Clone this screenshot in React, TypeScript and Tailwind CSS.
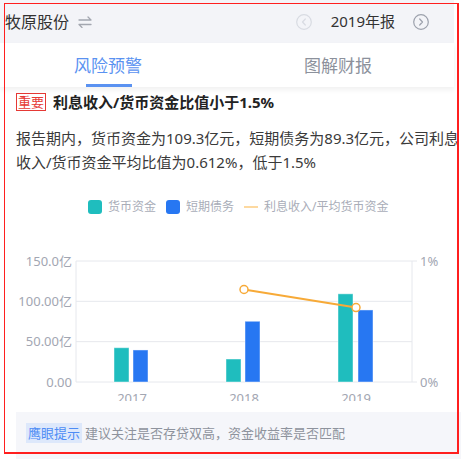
import React from "react";

const bars = [
  { x: 114, v: 42.5, c: "#1fbdbe" },
  { x: 133, v: 39.7, c: "#2777f2" },
  { x: 226, v: 28.5, c: "#1fbdbe" },
  { x: 245, v: 75.3, c: "#2777f2" },
  { x: 338, v: 109.3, c: "#1fbdbe" },
  { x: 358, v: 89.3, c: "#2777f2" },
];

const Y0 = 168;
const yv = (v: number) => Y0 - (v * 121) / 150;

function Chart() {
  return (
    <div className="h-[187px] w-[465px] overflow-hidden">
      <svg width="465" height="200" viewBox="0 0 465 200" style={{ fontFamily: "'Noto Sans','Noto Sans CJK SC',sans-serif" }}>
        {[0, 50, 100, 150].map((v) => (
          <line key={v} x1="76" x2="412" y1={yv(v)} y2={yv(v)} stroke="#e6e8ed" strokeWidth="1" />
        ))}
        <line x1="76" x2="76" y1={yv(150)} y2={Y0} stroke="#e6e8ed" />
        <line x1="412" x2="412" y1={yv(150)} y2={Y0} stroke="#e6e8ed" />
        <line x1="412" x2="417" y1={yv(150)} y2={yv(150)} stroke="#e6e8ed" />
        <line x1="412" x2="417" y1={Y0} y2={Y0} stroke="#e6e8ed" />
        {[
          ["150.0亿", 150],
          ["100.00亿", 100],
          ["50.00亿", 50],
          ["0.00", 0],
        ].map(([t, v]) => (
          <text key={t as string} x="72" y={yv(v as number) + 4.5} textAnchor="end" fontSize="13" fill="#a2a6b2">
            {t}
          </text>
        ))}
        <text x="420" y={yv(150) + 4.5} fontSize="13" fill="#a2a6b2">1%</text>
        <text x="420" y={Y0 + 4.5} fontSize="13" fill="#a2a6b2">0%</text>
        {bars.map((b, i) => (
          <rect key={i} x={b.x} y={yv(b.v)} width="15" height={Y0 - yv(b.v)} fill={b.c} stroke="#ffffff" strokeOpacity="0.45" strokeWidth="1" />
        ))}
        <line x1="244" y1="75.5" x2="356" y2="93.6" stroke="#f7aa38" strokeWidth="2" />
        <circle cx="244" cy="75.5" r="4" fill="#fff" stroke="#f7aa38" strokeWidth="1.5" />
        <circle cx="356" cy="93.6" r="4" fill="#fff" stroke="#f7aa38" strokeWidth="1.5" />
        {[
          ["2017", 132],
          ["2018", 244],
          ["2019", 356],
        ].map(([t, x]) => (
          <text key={t as string} x={x as number} y="189" textAnchor="middle" fontSize="13" fill="#a2a6b2">
            {t}
          </text>
        ))}
      </svg>
    </div>
  );
}

export default function App() {
  return (
    <div className="relative h-[459px] w-[465px] overflow-hidden bg-white font-['Noto_Sans','Noto_Sans_CJK_SC',sans-serif]">
      {/* header */}
      <div className="flex h-[43px] w-[454px] items-center bg-[#f3f4f8]">
        <span className="ml-[5px] text-[16px] leading-none text-[#333]">牧原股份</span>
        <svg className="ml-[9px]" width="14" height="12" viewBox="0 0 14 12" fill="none" stroke="#a3a7b0" strokeWidth="1.3" strokeLinecap="round" strokeLinejoin="round">
          <path d="M1 4 H13 L10 1" />
          <path d="M13 8.5 H1 L4 11.5" />
        </svg>
        <svg className="ml-auto" width="16" height="16" viewBox="0 0 16 16" fill="none" stroke="#d8dbe2" strokeWidth="1.2">
          <circle cx="8" cy="8" r="7.3" />
          <path d="M9.3 5 L6.5 8 L9.3 11" strokeLinecap="round" strokeLinejoin="round" />
        </svg>
        <span className="ml-[19px] text-[15px] leading-none text-[#333]">2019年报</span>
        <svg className="ml-[18px] mr-[25px]" width="16" height="16" viewBox="0 0 16 16" fill="none" stroke="#9ca1ac" strokeWidth="1.2">
          <circle cx="8" cy="8" r="7.3" />
          <path d="M6.7 5 L9.5 8 L6.7 11" strokeLinecap="round" strokeLinejoin="round" />
        </svg>
      </div>
      {/* tabs */}
      <div className="relative flex h-[44px] w-[454px] items-center bg-white shadow-[0_3px_5px_rgba(0,0,0,0.06)]">
        <div className="relative ml-[74px] flex h-full items-center">
          <span className="text-[17px] leading-none text-[#5a92f1]">风险预警</span>
          <div className="absolute bottom-0 left-[12px] h-[3px] w-[46px] bg-[#5a92f1]" />
        </div>
        <span className="ml-[162px] text-[17px] leading-none text-[#8c919c]">图解财报</span>
      </div>
      {/* content */}
      <div className="px-[16px]">
        <div className="mt-[6px] flex h-[18px] items-center">
          <span className="flex h-[18px] w-[30px] items-center justify-center border border-[#e53935] text-[13px] leading-none text-[#e53935]">
            重要
          </span>
          <span className="ml-[7px] text-[15px] font-bold leading-none text-[#222]">利息收入/货币资金比值小于1.5%</span>
        </div>
        <p className="mt-[15px] whitespace-nowrap text-[15px] leading-[24px] text-[#3a3a3a]">
          报告期内，货币资金为109.3亿元，短期债务为89.3亿元，公司利息
          <br />
          收入/货币资金平均比值为0.612%，低于1.5%
        </p>
        <div className="mt-[26px] flex h-[14px] items-center text-[12px] leading-none text-[#a9adb8]">
          <span className="ml-[72px] h-[14px] w-[14px] rounded-[3px] bg-[#1fbdbe]" />
          <span className="ml-[6px]">货币资金</span>
          <span className="ml-[10px] h-[14px] w-[14px] rounded-[3px] bg-[#2777f2]" />
          <span className="ml-[6px]">短期债务</span>
          <span className="ml-[10px] h-[2px] w-[14px] bg-[#fdd9a0]" />
          <span className="ml-[6px]">利息收入/平均货币资金</span>
        </div>
      </div>
      <Chart />
      <div className="ml-[16px] mt-[11px] flex h-[60px] w-[445px] items-start bg-[#f5f6fa] pt-[11px]">
        <span className="ml-[10px] flex h-[20px] w-[56px] items-center justify-center bg-[#dde8fb] text-[13px] leading-none text-[#4d8cf5]">
          鹰眼提示
        </span>
        <span className="ml-[3px] flex h-[20px] items-center text-[13px] leading-none text-[#8e939d]">
          建议关注是否存贷双高，资金收益率是否匹配
        </span>
      </div>
      {/* red frame overlay */}
      <div className="pointer-events-none absolute left-[4px] top-[3px] h-[451px] w-[455px] border-b-2 border-l border-r-2 border-t border-[#ff1f1f]" />
    </div>
  );
}
